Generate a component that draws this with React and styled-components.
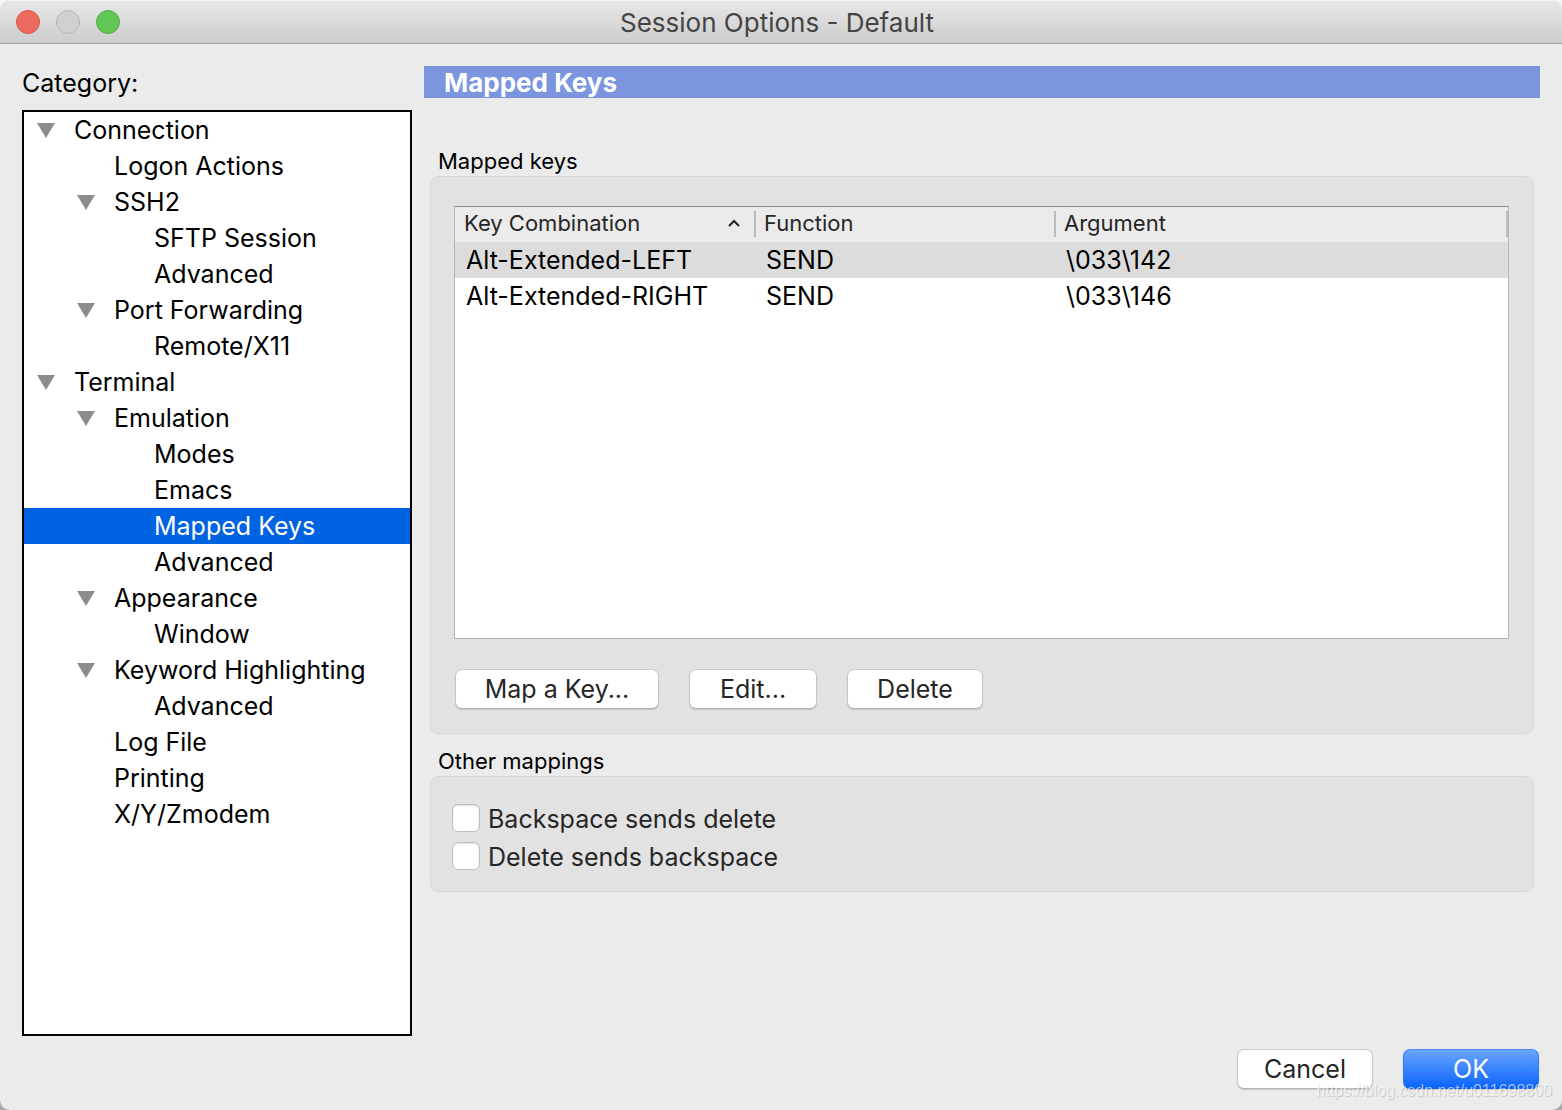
import React, { useState } from "react";
import styled, { createGlobalStyle } from "styled-components";

const GlobalStyle = createGlobalStyle`
  *, *::before, *::after { box-sizing: border-box; }
  body {
    margin: 0;
    background: linear-gradient(#f6f6f6 50%, #a8a8a8 50%);
    font-family: Inter, "Liberation Sans", sans-serif;
    font-size: 25px;
    line-height: 36px;
    color: #000;
  }
  button, input, table { font: inherit; color: inherit; }
`;

const Window = styled.main`
  position: relative;
  display: flex;
  flex-direction: column;
  min-height: 100vh;
  border-radius: 10px;
  overflow: hidden;
  background: #ebebeb;
`;

const TitleBar = styled.header`
  display: grid;
  grid-template-columns: 120px 1fr 128px;
  align-items: center;
  height: 44px;
  background: linear-gradient(#e7e7e7, #cdcdcd);
  border-top: 1px solid #f4f4f4;
  border-bottom: 1px solid #a2a2a2;
`;

const Lights = styled.div`
  display: flex;
  gap: 16px;
  padding-left: 16px;
`;

const Light = styled.button`
  width: 24px;
  height: 24px;
  padding: 0;
  border: 1px solid ${(p) => p.$edge};
  border-radius: 50%;
  background: ${(p) => p.$fill};
`;

const Title = styled.h1`
  margin: 0;
  padding-top: 2px;
  font-size: 26px;
  font-weight: 400;
  text-align: center;
  color: #444;
`;

const Body = styled.div`
  flex: 1;
  display: grid;
  grid-template-columns: 390px 1fr;
  gap: 12px;
  padding: 22px 22px 12px;
`;

const Sidebar = styled.nav`
  display: flex;
  flex-direction: column;
  gap: 10px;
`;

const SidebarLabel = styled.h2`
  margin: 0;
  font-size: 25px;
  font-weight: 400;
  line-height: 34px;
`;

const Tree = styled.ul`
  flex: 1;
  margin: 0;
  padding: 0;
  list-style: none;
  background: #fff;
  border: 2px solid #000;
`;

const TreeRow = styled.button`
  display: flex;
  align-items: center;
  gap: 19px;
  width: 100%;
  height: 36px;
  padding: 0 0 0 ${(p) => 13 + p.$level * 40}px;
  border: 0;
  text-align: left;
  white-space: nowrap;
  background: ${(p) => (p.$selected ? "#0063e1" : "transparent")};
  color: ${(p) => (p.$selected ? "#fff" : "#000")};
`;

const Disclosure = styled.svg`
  flex: none;
  width: 18px;
  height: 15px;
  fill: #8c8c8c;
`;

const Panel = styled.section`
  min-width: 0;
`;

const PanelTitle = styled.h2`
  margin: 0 0 48px;
  padding: 2px 20px 0;
  font-size: 26px;
  font-weight: 700;
  line-height: 30px;
  color: #fff;
  background: #7b95df;
`;

const Group = styled.section`
  margin: 0 6px 12px;
`;

const GroupLabel = styled.h3`
  margin: 0;
  padding: 0 8px;
  font-size: 22px;
  font-weight: 400;
  line-height: 30px;
`;

const GroupBox = styled.div`
  padding: ${(p) => p.$padding};
  background: #e2e2e2;
  border: 1px solid #d8d8d8;
  border-radius: 8px;
`;

const TableFrame = styled.div`
  height: 433px;
  background: #fff;
  border: 1px solid #b4b4b4;
  border-top-color: #8e8e8e;
`;

const Table = styled.table`
  width: 100%;
  table-layout: fixed;
  border-collapse: collapse;
`;

const HeadLabel = styled.div`
  display: flex;
  align-items: center;
  justify-content: space-between;
  padding: 0 14px 2px 8px;
  border-right: 2px solid #bcbcbc;
`;

const HeadCell = styled.th`
  width: ${(p) => p.$width || "auto"};
  height: 35px;
  padding: 0 0 1px;
  font-size: 22px;
  font-weight: 400;
  line-height: 24px;
  text-align: left;
  color: #262626;
  background: #ebebeb;

  &:first-child ${HeadLabel} {
    padding-left: 9px;
  }
`;

const SortArrow = styled.svg`
  width: 12px;
  height: 8px;
  fill: none;
  stroke: #262626;
  stroke-width: 2;
`;

const Row = styled.tr`
  background: ${(p) => (p.$selected ? "#dcdcdc" : "transparent")};
`;

const Cell = styled.td`
  height: 36px;
  padding: 0 10px;
  line-height: 36px;

  &:first-child {
    padding-left: 11px;
  }
`;

const Actions = styled.div`
  display: flex;
  gap: 30px;
  padding: 30px 1px 0;
`;

const PushButton = styled.button`
  width: ${(p) => p.$width};
  height: 40px;
  padding: 0;
  border: 1px solid;
  border-color: ${(p) =>
    p.$primary ? "#4a8df5 #2a78f5 #0a5ff0" : "#cbcbcb #c6c6c6 #b4b4b4"};
  border-radius: 7px;
  line-height: 38px;
  color: ${(p) => (p.$primary ? "#fff" : "#262626")};
  background: ${(p) => (p.$primary ? "linear-gradient(#6ba5fb, #0a64ff)" : "#fff")};
  box-shadow: 0 1px 1px rgba(0, 0, 0, 0.15);
`;

const CheckRow = styled.div`
  display: flex;
  align-items: center;
  gap: 8px;
  height: 38px;
  color: #262626;
`;

const Check = styled.input`
  appearance: none;
  width: 28px;
  height: 28px;
  margin: 0;
  background: ${(p) => (p.checked ? "#0a64ff" : "#fff")};
  border: 1px solid #bfbfbf;
  border-radius: 6px;
  box-shadow: inset 0 1px 2px #dedede;
`;

const CheckLabel = styled.label`
  padding-top: 2px;
`;

const Footer = styled.footer`
  display: flex;
  justify-content: flex-end;
  gap: 30px;
  padding: 1px 23px 21px;
`;

const Watermark = styled.span`
  position: absolute;
  right: 10px;
  bottom: 9px;
  font-family: "Liberation Sans", Arial, sans-serif;
  font-size: 16px;
  line-height: 20px;
  color: rgba(255, 255, 255, 0.6);
  text-shadow: 1px 1px 1px rgba(0, 0, 0, 0.16);
  pointer-events: none;
`;

const categories = [
  { id: "connection", label: "Connection", level: 0, parent: true },
  { id: "logon", label: "Logon Actions", level: 1 },
  { id: "ssh2", label: "SSH2", level: 1, parent: true },
  { id: "sftp", label: "SFTP Session", level: 2 },
  { id: "ssh2-advanced", label: "Advanced", level: 2 },
  { id: "forwarding", label: "Port Forwarding", level: 1, parent: true },
  { id: "x11", label: "Remote/X11", level: 2 },
  { id: "terminal", label: "Terminal", level: 0, parent: true },
  { id: "emulation", label: "Emulation", level: 1, parent: true },
  { id: "modes", label: "Modes", level: 2 },
  { id: "emacs", label: "Emacs", level: 2 },
  { id: "mapped-keys", label: "Mapped Keys", level: 2 },
  { id: "emulation-advanced", label: "Advanced", level: 2 },
  { id: "appearance", label: "Appearance", level: 1, parent: true },
  { id: "window", label: "Window", level: 2 },
  { id: "keywords", label: "Keyword Highlighting", level: 1, parent: true },
  { id: "keywords-advanced", label: "Advanced", level: 2 },
  { id: "log", label: "Log File", level: 1 },
  { id: "printing", label: "Printing", level: 1 },
  { id: "zmodem", label: "X/Y/Zmodem", level: 1 },
];

const mappings = [
  { keys: "Alt-Extended-LEFT", fn: "SEND", arg: "\\033\\142" },
  { keys: "Alt-Extended-RIGHT", fn: "SEND", arg: "\\033\\146" },
];

function CheckOption({ id, children }) {
  const [checked, setChecked] = useState(false);
  return (
    <CheckRow>
      <Check
        id={id}
        type="checkbox"
        checked={checked}
        onChange={(e) => setChecked(e.target.checked)}
      />
      <CheckLabel htmlFor={id}>{children}</CheckLabel>
    </CheckRow>
  );
}

export default function App() {
  const [category, setCategory] = useState("mapped-keys");
  const [selectedRow, setSelectedRow] = useState(0);

  return (
    <>
      <GlobalStyle />
      <Window>
        <TitleBar>
          <Lights>
            <Light aria-label="Close" $fill="#ee6a5f" $edge="#dc5348" />
            <Light aria-label="Minimize" $fill="#d0d0d0" $edge="#b4b4b4" disabled />
            <Light aria-label="Zoom" $fill="#62c655" $edge="#4fae40" />
          </Lights>
          <Title>Session Options - Default</Title>
        </TitleBar>
        <Body>
          <Sidebar>
            <SidebarLabel>Category:</SidebarLabel>
            <Tree>
              {categories.map((c) => (
                <li key={c.id}>
                  <TreeRow
                    $level={c.level}
                    $selected={c.id === category}
                    onClick={() => setCategory(c.id)}
                  >
                    <Disclosure viewBox="0 0 18 15" aria-hidden="true">
                      {c.parent && <path d="M0 0H18L9 15Z" />}
                    </Disclosure>
                    {c.label}
                  </TreeRow>
                </li>
              ))}
            </Tree>
          </Sidebar>
          <Panel>
            <PanelTitle>Mapped Keys</PanelTitle>
            <Group>
              <GroupLabel>Mapped keys</GroupLabel>
              <GroupBox $padding="29px 24px 24px 23px">
                <TableFrame>
                  <Table>
                    <thead>
                      <tr>
                        <HeadCell $width="301px">
                          <HeadLabel>
                            Key Combination
                            <SortArrow viewBox="0 0 12 8" aria-hidden="true">
                              <path d="M1 7L6 2L11 7" />
                            </SortArrow>
                          </HeadLabel>
                        </HeadCell>
                        <HeadCell $width="300px">
                          <HeadLabel>Function</HeadLabel>
                        </HeadCell>
                        <HeadCell>
                          <HeadLabel>Argument</HeadLabel>
                        </HeadCell>
                      </tr>
                    </thead>
                    <tbody>
                      {mappings.map((m, i) => (
                        <Row
                          key={m.keys}
                          $selected={i === selectedRow}
                          onClick={() => setSelectedRow(i)}
                        >
                          <Cell>{m.keys}</Cell>
                          <Cell>{m.fn}</Cell>
                          <Cell>{m.arg}</Cell>
                        </Row>
                      ))}
                    </tbody>
                  </Table>
                </TableFrame>
                <Actions>
                  <PushButton $width="204px">Map a Key...</PushButton>
                  <PushButton $width="128px">Edit...</PushButton>
                  <PushButton $width="136px">Delete</PushButton>
                </Actions>
              </GroupBox>
            </Group>
            <Group>
              <GroupLabel>Other mappings</GroupLabel>
              <GroupBox $padding="22px 21px 16px">
                <CheckOption id="backspace-delete">Backspace sends delete</CheckOption>
                <CheckOption id="delete-backspace">Delete sends backspace</CheckOption>
              </GroupBox>
            </Group>
          </Panel>
        </Body>
        <Footer>
          <PushButton $width="136px">Cancel</PushButton>
          <PushButton $width="136px" $primary>OK</PushButton>
        </Footer>
        <Watermark>https://blog.csdn.net/u011698800</Watermark>
      </Window>
    </>
  );
}
